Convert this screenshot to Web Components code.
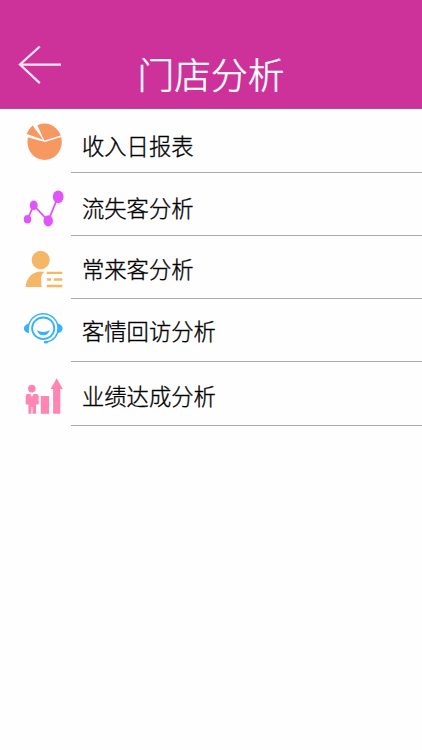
<!DOCTYPE html>
<html lang="zh-CN">
<head>
<meta charset="utf-8">
<title>门店分析</title>
<style>
  body {
    margin: 0;
    background: #fefefe;
    font-family: "Noto Sans CJK SC", sans-serif;
  }
</style>
</head>
<body>
<store-page>
  <page-header slot="header">门店分析</page-header>
  <menu-row icon="pie" top="109" height="64" shift="4">收入日报表</menu-row>
  <menu-row icon="line" top="173" height="63" shift="2">流失客分析</menu-row>
  <menu-row icon="member" top="236" height="63" shift="0">常来客分析</menu-row>
  <menu-row icon="service" top="299" height="63" shift="-1">客情回访分析</menu-row>
  <menu-row icon="growth" top="362" height="64" shift="1">业绩达成分析</menu-row>
</store-page>

<script>
// Icon shapes, drawn in page coordinates. Each row moves the view box to its own top.
const icons = {
  pie: `
    <g fill="#f79762">
      <ellipse cx="44.6" cy="141.8" rx="17.2" ry="18.2"/>
      <path d="M45 142 L35.8 122 L24 122 L24 136.2 Z" fill="#fefefe"/>
      <path d="M43.2 139.8 L26.6 134.1 Q28.3 128.8 32.6 125.4 Z"/>
      <path d="M44.7 141.3 L62.5 135.8" fill="none" stroke="#fefefe" stroke-width="1.6"/>
    </g>`,
  line: `
    <g fill="#e055fb">
      <path d="M27.5 219.2 L33.7 205.3 L48.2 220.8 L58 196.8" fill="none" stroke="#e055fb" stroke-width="1.8"/>
      <ellipse cx="27.5" cy="219.2" rx="3.7" ry="4.3"/>
      <ellipse cx="33.7" cy="205.3" rx="4" ry="4.8"/>
      <ellipse cx="48.2" cy="220.8" rx="4.7" ry="5.6"/>
      <ellipse cx="58.2" cy="196.8" rx="5.4" ry="6.3"/>
    </g>`,
  member: `
    <g fill="#f5b666">
      <ellipse cx="40.7" cy="260" rx="9" ry="9.3"/>
      <path d="M25.5 287 C26.5 278 32 271.8 41.2 271.6 C42.3 271.6 43.3 271.8 44.3 272.1 Q41.3 274.5 41 279 L41.6 287 Z"/>
      <path d="M46.7 271.8 H62.3 V274.1 H46.7 Z M47 278.3 H51 V280.8 H47 Z M53.8 278.3 H62.2 V280.8 H53.8 Z M46.7 284.7 H62.3 V287.2 H46.7 Z"/>
    </g>`,
  service: `
    <g fill="none" stroke="#38b3fb">
      <path d="M28.4 328.5 A14.7 14.7 0 0 1 58 328.5 Q57.8 339.7 46.2 342.2" stroke-width="1.4"/>
      <ellipse cx="43.2" cy="328.3" rx="11.1" ry="10.8" stroke-width="1.8"/>
      <path d="M28.9 323.6 V333.3 C22.3 332.2 22.3 324.9 28.9 323.6 Z M57.7 323.6 V333.3 C64.3 332.2 64.3 324.9 57.7 323.6 Z" fill="#38b3fb" stroke="none"/>
      <path d="M37 330.3 Q43.3 333.9 49.8 330.3 Q48.5 335.3 43.4 335.3 Q38.2 335.3 37 330.3 Z" fill="#38b3fb" stroke="none"/>
      <ellipse cx="45.9" cy="342.2" rx="2" ry="1.4" fill="#38b3fb" stroke="none"/>
    </g>`,
  growth: `
    <g fill="#ff86b2">
      <ellipse cx="31.8" cy="388.6" rx="3.8" ry="3.9"/>
      <path d="M27.2 394 H30.2 L31.9 397 L33.6 394 H36.6 Q38.7 394.2 38.7 396.3 V404.4 H36 V413.7 H32.5 V407 H31.4 V413.7 H28.4 V404.4 H25.7 V396.3 Q25.7 394.2 27.2 394 Z"/>
      <path d="M40.8 396 H49.1 V413.8 H40.8 Z"/>
      <path d="M56.7 378.3 L62.8 389 H60.3 V413.8 H53.1 V389 H50.6 Z"/>
    </g>`
}

customElements.define('store-page',
  /**
   * The page: a header above the list of reports.
   */
  class extends HTMLElement {
    constructor () {
      super()
      this.attachShadow({ mode: 'open' }).innerHTML = `
        <style>
          :host {
            display: flex;
            flex-direction: column;
            height: 750px;
            overflow: hidden;
          }
          main {
            display: flex;
            flex-direction: column;
          }
        </style>
        <slot name="header"></slot>
        <main><slot></slot></main>`
    }
  }
)

customElements.define('page-header',
  /**
   * The title bar with the back arrow.
   */
  class extends HTMLElement {
    constructor () {
      super()
      this.attachShadow({ mode: 'open' }).innerHTML = `
        <style>
          :host {
            box-sizing: border-box;
            display: grid;
            grid-template-columns: 71px 1fr 71px;
            height: 109px;
            border-bottom: 1px solid #b04a93;
            background: #cc3299;
            color: #fff;
          }
          h1 {
            margin: 0;
            padding-top: 46px;
            font-size: 36.7px;
            font-weight: 300;
            line-height: 54px;
            text-align: center;
            white-space: nowrap;
            -webkit-text-stroke: 0.5px #fff;
          }
        </style>
        <svg width="71" height="108" viewBox="0 0 71 108" fill="none" stroke="#ffe6fa" stroke-width="2.3">
          <path d="M39.8 46.5 L20 64.5 L39.8 83.2 M20 64.6 H61"/>
        </svg>
        <h1><slot></slot></h1>`
    }
  }
)

customElements.define('menu-row',
  /**
   * One report in the list.
   */
  class extends HTMLElement {
    /**
     * Called after the element is inserted into the DOM.
     */
    connectedCallback () {
      const top = this.getAttribute('top')
      const height = this.getAttribute('height')

      this.attachShadow({ mode: 'open' }).innerHTML = `
        <style>
          :host {
            display: grid;
            grid-template-columns: 71px 1fr;
            height: ${height}px;
          }
          .label {
            box-sizing: border-box;
            padding: ${Number(this.getAttribute('shift')) + 16}px 0 0 11px;
            border-bottom: 1px solid #aaa;
            color: #000;
            font-size: 22.3px;
            font-weight: 300;
            line-height: 32px;
            white-space: nowrap;
            -webkit-text-stroke: 0.35px #000;
          }
        </style>
        <svg width="71" height="${height}" viewBox="0 ${top} 71 ${height}">${icons[this.getAttribute('icon')]}</svg>
        <div class="label"><slot></slot></div>`
    }
  }
)
</script>
</body>
</html>
